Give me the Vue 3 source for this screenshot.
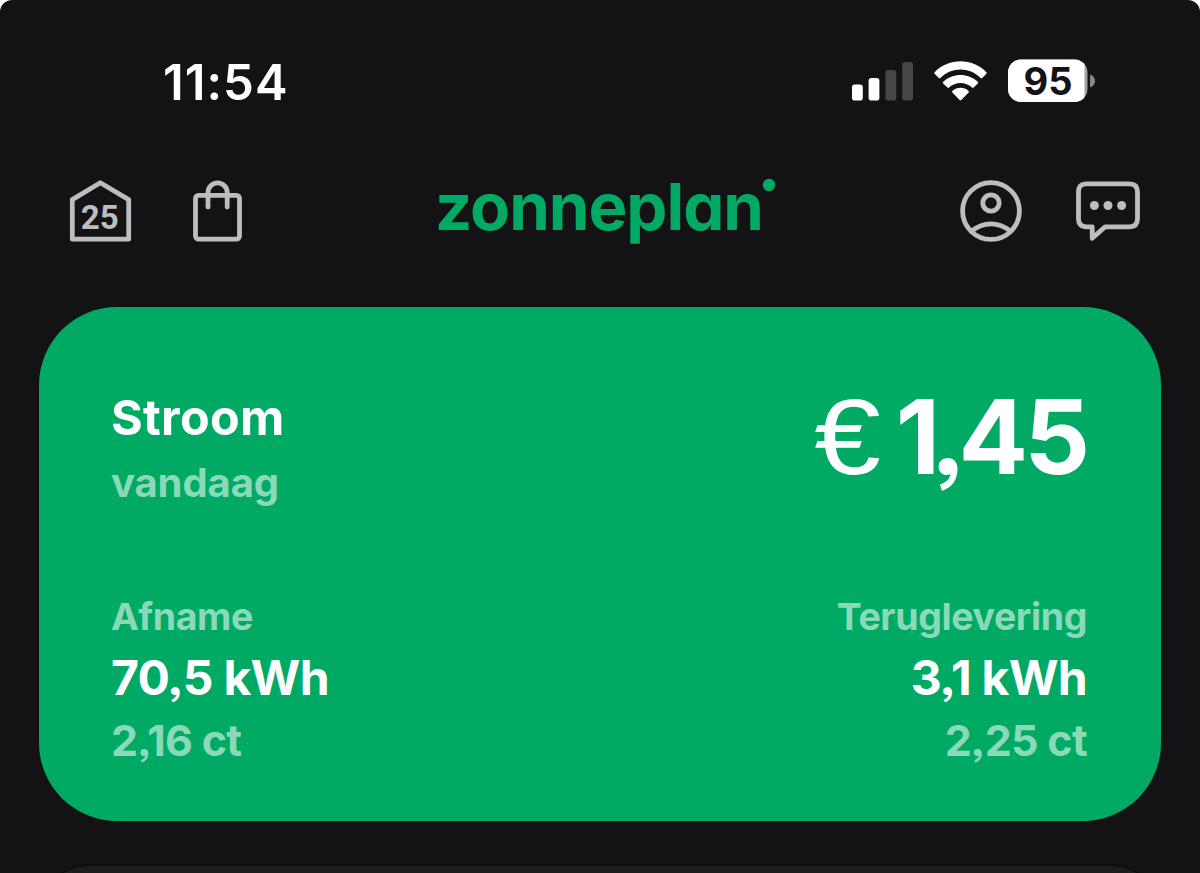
<script setup>
const signalBars = [
  { x: 0, height: 16, active: true },
  { x: 16.6, height: 22.5, active: true },
  { x: 33.4, height: 30.5, active: false },
  { x: 50.2, height: 38.5, active: false },
];

const usage = [
  { label: "Afname", amount: "70,5 kWh", price: "2,16 ct" },
  { label: "Teruglevering", amount: "3,1 kWh", price: "2,25 ct" },
];
</script>

<template>
  <div class="screen">
    <div class="status-bar">
      <span class="time">11:54</span>
      <div class="status-icons">
        <svg class="signal" width="62" height="40" viewBox="0 0 62 40">
          <rect
            v-for="bar in signalBars"
            :key="bar.x"
            :x="bar.x"
            :y="39.5 - bar.height"
            width="10.8"
            :height="bar.height"
            rx="2.8"
            :fill="bar.active ? '#fff' : '#464648'"
          />
        </svg>
        <svg class="wifi" width="54" height="40" viewBox="0 0 54 40" fill="#fff">
          <path d="M.6 11.2C15-3.3 38-3.3 52.4 11.2Q53.2 12 52.4 12.8L48.2 17Q47.4 17.7 46.6 17C35.2 5.8 17.8 5.8 6.4 17Q5.6 17.7 4.8 17L.6 12.8Q-.2 12 .6 11.2Z" />
          <path d="M9.2 20.8C18.8 11.7 34.2 11.7 43.8 20.8Q44.6 21.6 43.8 22.4L39.6 26.6Q38.8 27.3 38 26.6C31.5 20.6 21.5 20.6 15 26.6Q14.2 27.3 13.4 26.6L9.2 22.4Q8.4 21.6 9.2 20.8Z" />
          <path d="M18.4 29.9C22.9 25.7 30.1 25.7 34.6 29.9Q35.4 30.7 34.6 31.5L27.3 38.9Q26.5 39.7 25.7 38.9L18.4 31.5Q17.6 30.7 18.4 29.9Z" />
        </svg>
        <svg class="battery" width="88" height="44" viewBox="0 0 88 44">
          <defs>
            <clipPath id="battery-shape">
              <rect x="0" y=".5" width="79.5" height="42.5" rx="13" />
            </clipPath>
          </defs>
          <g clip-path="url(#battery-shape)">
            <rect width="80" height="44" fill="#a2a2a3" />
            <rect width="76.5" height="44" fill="#fff" />
          </g>
          <path d="M82 15.5C85.3 16.5 87 19 87 22S85.3 27.5 82 28.5Z" fill="#858586" />
          <text x="40" y="35.5" class="battery-level" text-anchor="middle" textLength="49" lengthAdjust="spacingAndGlyphs">95</text>
        </svg>
      </div>
    </div>

    <header class="app-header">
      <button class="icon-button home" aria-label="Woning">
        <svg width="64" height="64" viewBox="0 0 64 64">
          <path d="M4.3 20.6 32.3 3.7 60.7 20.6V60.2H4.3Z" class="line" />
          <text x="31.8" y="50" class="home-number" text-anchor="middle" textLength="38" lengthAdjust="spacingAndGlyphs">25</text>
        </svg>
      </button>
      <button class="icon-button bag" aria-label="Winkel">
        <svg width="50" height="64" viewBox="0 0 50 64">
          <rect x="2.5" y="16.3" width="44" height="43.8" rx="3" class="line" />
          <path d="M15 28V13.5A9.6 9.6 0 0 1 34.2 13.5V28" class="line" />
        </svg>
      </button>
      <svg class="logo" width="340" height="72" viewBox="0 0 340 72" fill="#00aa65">
        <text x="-1" y="54" class="wordmark" textLength="328" lengthAdjust="spacingAndGlyphs">zonneplan</text>
        <circle cx="333" cy="9" r="6.2" />
      </svg>
      <button class="icon-button account" aria-label="Account">
        <svg width="64" height="64" viewBox="0 0 64 64">
          <circle cx="32" cy="32" r="28.4" class="line" />
          <circle cx="32" cy="24" r="8.2" class="line" />
          <path d="M12.5 52.2Q21.5 44.8 32 44.8T51.5 52.2" class="line" />
        </svg>
      </button>
      <button class="icon-button chat" aria-label="Berichten">
        <svg width="66" height="64" viewBox="0 0 66 64">
          <path d="M11.5 4.9H54.5Q62.5 4.9 62.5 12.9V39.8Q62.5 47.8 54.5 47.8H30.2L17.2 59.3V47.8H11.5Q3.5 47.8 3.5 39.8V12.9Q3.5 4.9 11.5 4.9Z" class="line" />
          <circle cx="19.4" cy="26.5" r="4.5" class="dot" />
          <circle cx="33" cy="26.5" r="4.5" class="dot" />
          <circle cx="46.6" cy="26.5" r="4.5" class="dot" />
        </svg>
      </button>
    </header>

    <main>
      <section class="card">
        <div class="card-top">
          <div>
            <h1 class="title">Stroom</h1>
            <p class="period">vandaag</p>
          </div>
          <div class="total"><span class="currency">€</span><span class="tight">1,</span>45</div>
        </div>
        <div class="card-bottom">
          <div v-for="item in usage" :key="item.label" class="usage">
            <span class="label">{{ item.label }}</span>
            <span class="amount">{{ item.amount }}</span>
            <span class="price">{{ item.price }}</span>
          </div>
        </div>
      </section>
      <section class="next-card"></section>
    </main>
  </div>
</template>

<style>
body {
  margin: 0;
  background: #fff;
}
</style>

<style scoped>
.screen {
  width: 1200px;
  height: 873px;
  box-sizing: border-box;
  overflow: hidden;
  border-radius: 12px 12px 0 0;
  background: #131315;
  color: #fff;
  font-family: Inter, "Liberation Sans", sans-serif;
}

.status-bar {
  display: flex;
  justify-content: space-between;
  height: 102px;
  padding: 53px 104px 0 163px;
  box-sizing: border-box;
}

.time {
  font-size: 49px;
  line-height: 60px;
  font-weight: 600;
  letter-spacing: 1px;
}

.status-icons {
  display: flex;
  align-items: flex-start;
}

.signal {
  margin: 8px 20px 0 0;
}

.wifi {
  margin: 8px 20px 0 0;
}

.battery {
  margin-top: 6px;
  overflow: visible;
}

.battery-level {
  font-size: 38px;
  font-weight: 700;
  fill: #131315;
}

.app-header {
  display: flex;
  align-items: flex-start;
  height: 205px;
  padding: 77px 58px 0 68px;
  box-sizing: border-box;
}

.icon-button {
  padding: 0;
  border: 0;
  background: none;
  color: #bdbdbe;
  line-height: 0;
}

.bag {
  margin-left: 61px;
}

.logo {
  margin: -3px 0 0 193px;
  overflow: visible;
}

.account {
  margin-left: 183px;
}

.chat {
  margin-left: 52px;
}

.line {
  fill: none;
  stroke: currentColor;
  stroke-width: 4.8;
  stroke-linecap: round;
  stroke-linejoin: round;
}

.dot {
  fill: currentColor;
}

.home-number {
  font-family: Roboto, sans-serif;
  font-size: 34px;
  font-weight: 700;
  fill: currentColor;
}

.wordmark {
  font-size: 65px;
  font-weight: 700;
  letter-spacing: -1px;
  font-feature-settings: "cv11";
}

.card {
  display: flex;
  flex-direction: column;
  justify-content: space-between;
  height: 514px;
  margin: 0 39px;
  padding: 81px 74px 54px 72px;
  box-sizing: border-box;
  border-radius: 78px;
  background: #00aa65;
  font-feature-settings: "ss03";
}

.card-top,
.card-bottom {
  display: flex;
  justify-content: space-between;
}

.title {
  margin: 0;
  font-size: 48.5px;
  line-height: 60px;
  font-weight: 700;
  letter-spacing: 0.3px;
}

.period {
  margin: 10px 0 0;
  font-size: 40px;
  line-height: 50px;
  font-weight: 700;
  letter-spacing: -0.1px;
}

.period,
.label,
.price {
  color: #8ad9b8;
}

.total {
  margin: -13px 1px 0 0;
  font-size: 103px;
  line-height: 124px;
  font-weight: 700;
  letter-spacing: -4px;
}

.currency {
  display: inline-block;
  margin-right: 19px;
  font-family: "Liberation Sans", sans-serif;
  font-size: 107px;
  line-height: 1;
  font-weight: 400;
  transform: scaleX(1.12);
  transform-origin: right;
}

.tight {
  letter-spacing: -8px;
}

.usage {
  display: flex;
  flex-direction: column;
}

.usage:last-child {
  align-items: flex-end;
}

.label {
  font-size: 37.5px;
  line-height: 46px;
  font-weight: 700;
  letter-spacing: -0.4px;
}

.amount {
  margin-top: 8px;
  font-size: 48px;
  line-height: 60px;
  font-weight: 700;
  letter-spacing: -0.7px;
}

.price {
  margin-top: 5px;
  font-size: 43px;
  line-height: 54px;
  font-weight: 700;
  letter-spacing: -0.7px;
}

.next-card {
  height: 200px;
  margin: 43px 39px 0;
  border: 2px solid #0d0d0e;
  border-radius: 50px;
  box-sizing: border-box;
  background: #1d1d1f;
}
</style>
